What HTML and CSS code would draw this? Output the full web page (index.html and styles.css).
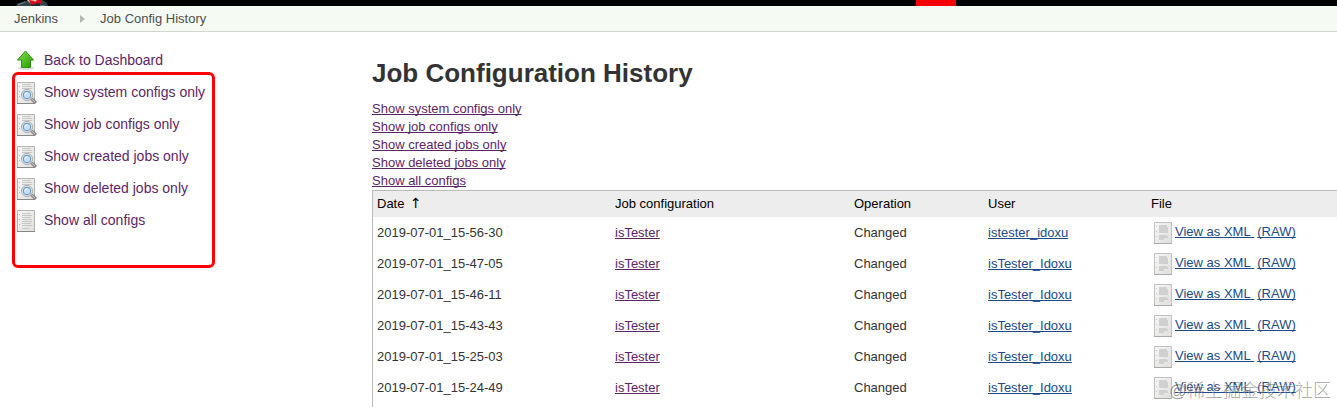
FILE: index.html
```html
<!DOCTYPE html>
<html lang="en">
<head>
	<meta charset="UTF-8">
	<title>Job Configuration History [Jenkins]</title>
	<link rel="stylesheet" href="styles.css">
</head>
<body>
	<!-- shared icons -->
	<svg class="sprite" aria-hidden="true">
		<defs>
			<linearGradient id="paper" x1="0" y1="0" x2="1" y2="1">
				<stop offset="0" stop-color="#f8f8f8"/>
				<stop offset="1" stop-color="#dededc"/>
			</linearGradient>
			<linearGradient id="green" x1="0" y1="0" x2="1" y2="1">
				<stop offset="0" stop-color="#8be04e"/>
				<stop offset="1" stop-color="#1f9a00"/>
			</linearGradient>
		</defs>
		<symbol id="icon-up" viewBox="0 0 20 22">
			<ellipse cx="9" cy="18" rx="8" ry="2" fill="#ddd"/>
			<path d="M8.500 1L16.500 10H13.500V17.500H4.500V10H.5Z" fill="url(#green)" stroke="#2f9412"/>
		</symbol>
		<symbol id="icon-page" viewBox="0 0 20 22">
			<path d="M.5.5h17v21H.5z" fill="url(#paper)" stroke="#b4b4b1"/>
			<path d="M0 21.500h18" stroke="#888"/>
			<path d="M2.500 4v1M2.500 9v1M2.500 14v1" stroke="#bbb"/>
			<path d="M5 3.500h9M5 5.500h10M5 7.500h9M5 9.500h10M5 11.500h10M5 13.500h9M5 15.500h10M5 18.500h7" stroke="#c6c6c6"/>
		</symbol>
		<symbol id="icon-search" viewBox="0 0 20 22">
			<path d="M.5.5h17v21H.5z" fill="url(#paper)" stroke="#b4b4b1"/>
			<path d="M0 21.500h18" stroke="#888"/>
			<path d="M2.500 4v1M2.500 9v1M2.500 14v1" stroke="#bbb"/>
			<path d="M5 2.500h9M5 4.500h10M5 6.500h10" stroke="#c6c6c6"/>
			<path d="M14.500 17l3.500 3" stroke="#888" stroke-width="3" stroke-linecap="round"/>
			<path d="M14.500 17l3 2.500" stroke="#ccc" stroke-linecap="round"/>
			<circle cx="10" cy="13" r="5.500" fill="#eceeef" stroke="#a8a8a8"/>
			<circle cx="10" cy="13" r="3.800" fill="#c4e0f8" stroke="#5f8fc6"/>
			<path d="M8 12.500q.5-1.500 2-1.500" fill="none" stroke="#fff"/>
		</symbol>
		<symbol id="icon-doc" viewBox="0 0 20 22">
			<path d="M1.500.5h17v21h-17z" fill="url(#paper)" stroke="#c0c0be"/>
			<path d="M1 21.500h18" stroke="#aaa"/>
			<path d="M3.500 4v1M3.500 9v1M3.500 14v1" stroke="#ccc"/>
			<path d="M6 3h8v2h1v6H6zM6 13h8v1h1v2h-4v2H6z" fill="#d0d0d0"/>
		</symbol>
	</svg>

	<header id="header">
		<svg class="logo" viewBox="0 0 32 6" aria-hidden="true">
			<path d="M0 6L2 3 10 1 12 0h14l5 3 1 3z" fill="#31434c"/>
			<path d="M11 0h14l-4 4h-6z" fill="#e8c3ae"/>
			<path d="M17 2l-2 4h13l-3-3z" fill="#1f2c33"/>
			<path d="M13 0l5 1 1 1 2-2h5v4l-5-1-2 1-4 1z" fill="#d8001b"/>
			<path d="M2 5l7-3M24 5l5 1" stroke="#71868e"/>
		</svg>
		<span class="alert"></span>
	</header>
	<nav id="breadcrumbs">
		<a href="#">Jenkins</a>
		<span class="separator"></span>
		<a href="#">Job Config History</a>
	</nav>

	<div id="page">
		<aside id="side-panel">
			<a class="task" href="#"><svg><use href="#icon-up"/></svg>Back to Dashboard</a>
			<div class="marked">
				<a class="task" href="#"><svg><use href="#icon-search"/></svg>Show system configs only</a>
				<a class="task" href="#"><svg><use href="#icon-search"/></svg>Show job configs only</a>
				<a class="task" href="#"><svg><use href="#icon-search"/></svg>Show created jobs only</a>
				<a class="task" href="#"><svg><use href="#icon-search"/></svg>Show deleted jobs only</a>
				<a class="task" href="#"><svg><use href="#icon-page"/></svg>Show all configs</a>
			</div>
		</aside>

		<main id="main-panel">
			<h1>Job Configuration History</h1>
			<ul class="filters">
				<li><a href="#">Show system configs only</a></li>
				<li><a href="#">Show job configs only</a></li>
				<li><a href="#">Show created jobs only</a></li>
				<li><a href="#">Show deleted jobs only</a></li>
				<li><a href="#">Show all configs</a></li>
			</ul>
			<div class="history">
				<table>
					<thead>
						<tr>
							<th class="date">Date <span class="arrow">↑</span></th>
							<th class="job">Job configuration</th>
							<th class="operation">Operation</th>
							<th class="user">User</th>
							<th>File</th>
						</tr>
					</thead>
					<tbody>
						<tr>
							<td>2019-07-01_15-56-30</td>
							<td><a href="#">isTester</a></td>
							<td>Changed</td>
							<td><a class="new" href="#">istester_idoxu</a></td>
							<td><div class="file"><svg><use href="#icon-doc"/></svg><a class="new" href="#">View as XML&nbsp;</a><a class="new" href="#">(RAW)</a></div></td>
						</tr>
						<tr>
							<td>2019-07-01_15-47-05</td>
							<td><a href="#">isTester</a></td>
							<td>Changed</td>
							<td><a class="new" href="#">isTester_Idoxu</a></td>
							<td><div class="file"><svg><use href="#icon-doc"/></svg><a class="new" href="#">View as XML&nbsp;</a><a class="new" href="#">(RAW)</a></div></td>
						</tr>
						<tr>
							<td>2019-07-01_15-46-11</td>
							<td><a href="#">isTester</a></td>
							<td>Changed</td>
							<td><a class="new" href="#">isTester_Idoxu</a></td>
							<td><div class="file"><svg><use href="#icon-doc"/></svg><a class="new" href="#">View as XML&nbsp;</a><a class="new" href="#">(RAW)</a></div></td>
						</tr>
						<tr>
							<td>2019-07-01_15-43-43</td>
							<td><a href="#">isTester</a></td>
							<td>Changed</td>
							<td><a class="new" href="#">isTester_Idoxu</a></td>
							<td><div class="file"><svg><use href="#icon-doc"/></svg><a class="new" href="#">View as XML&nbsp;</a><a class="new" href="#">(RAW)</a></div></td>
						</tr>
						<tr>
							<td>2019-07-01_15-25-03</td>
							<td><a href="#">isTester</a></td>
							<td>Changed</td>
							<td><a class="new" href="#">isTester_Idoxu</a></td>
							<td><div class="file"><svg><use href="#icon-doc"/></svg><a class="new" href="#">View as XML&nbsp;</a><a class="new" href="#">(RAW)</a></div></td>
						</tr>
						<tr>
							<td>2019-07-01_15-24-49</td>
							<td><a href="#">isTester</a></td>
							<td>Changed</td>
							<td><a class="new" href="#">isTester_Idoxu</a></td>
							<td><div class="file"><svg><use href="#icon-doc"/></svg><a class="new" href="#">View as XML&nbsp;</a><a class="new" href="#">(RAW)</a></div></td>
						</tr>
					</tbody>
				</table>
			</div>
		</main>
	</div>
	<div class="watermark">@稀土掘金技术社区</div>
</body>
</html>
```
FILE: styles.css
```css
body {
	margin: 0;
	background: #fff;
	color: #333;
	font-family: "Liberation Sans", Arial, "Noto Sans CJK SC", sans-serif;
	font-size: 13px;
	line-height: 18px;
}
a {
	color: #5c2666;
	text-decoration-skip-ink: none;
}
a.new {
	color: #204a87;
}
.sprite {
	position: absolute;
	width: 0;
	height: 0;
}

#header {
	display: flex;
	justify-content: space-between;
	height: 6px;
	padding-left: 16px;
	background: #000;
}
.logo {
	width: 32px;
	height: 6px;
}
.alert {
	width: 40px;
	margin-right: 381px;
	background: #f80000;
}
#breadcrumbs {
	display: flex;
	align-items: center;
	height: 25px;
	padding-left: 14px;
	background: #f5faf3;
	border-bottom: 1px solid #d3d7cf;
}
#breadcrumbs a {
	color: #4d4f4c;
	text-decoration: none;
}
.separator {
	margin: 0 15px 0 22px;
	border: 4px solid transparent;
	border-left: 5px solid #b5b8b3;
	border-right: 0;
}

#page {
	display: flex;
}
#side-panel {
	flex: none;
	box-sizing: border-box;
	width: 372px;
	padding: 12px 12px 0;
}
.task {
	display: flex;
	align-items: center;
	gap: 7px;
	height: 32px;
	padding-left: 5px;
	font-size: 14px;
	text-decoration: none;
}
.task svg {
	width: 20px;
	height: 22px;
	padding-top: 2px;
}
/* highlighted group of tasks */
.marked {
	box-sizing: border-box;
	width: 203px;
	margin-top: -4px;
	padding: 1px 0 29px;
	border: 3px solid #f00;
	border-radius: 6px;
}
.marked .task {
	padding-left: 2px;
}

#main-panel {
	flex: 1;
	padding-top: 24px;
}
h1 {
	margin: 0 0 10px;
	font-size: 26px;
	line-height: 34px;
}
.filters {
	margin: 0;
	padding: 0;
	list-style: none;
}
.history {
	padding-bottom: 4px;
	border: 1px solid #bbb;
	border-width: 1px 0 0 1px;
}
table {
	width: 100%;
	table-layout: fixed;
	border-collapse: collapse;
}
th {
	height: 26px;
	padding: 0 4px;
	background: #ededed;
	color: #000;
	font-weight: normal;
	text-align: left;
}
td {
	height: 31px;
	padding: 0 4px;
}
.date {
	width: 230px;
}
.job {
	width: 231px;
}
.operation {
	width: 126px;
}
.user {
	width: 155px;
}
.arrow {
	margin-left: 2px;
	font-family: "DejaVu Sans", sans-serif;
	font-size: 14px;
	line-height: 14px;
}
.file {
	display: flex;
	align-items: center;
	padding-left: 2px;
}
.file svg {
	width: 20px;
	height: 22px;
	margin-right: 2px;
}
.file a {
	padding-bottom: 2px;
}
.file a + a {
	margin-left: 3px;
}

.watermark {
	position: absolute;
	right: 7px;
	bottom: 4px;
	color: rgba(255, 255, 255, .4);
	font-size: 18px;
	font-weight: 300;
	line-height: 26px;
	text-shadow: 1px 1px 0 rgba(70, 70, 70, .55);
}
```
